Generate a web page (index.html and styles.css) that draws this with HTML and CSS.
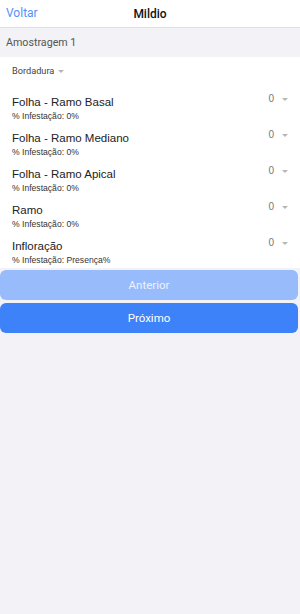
FILE: index.html
```html
<!DOCTYPE html>
<html lang="pt">
<head>
    <meta charset="UTF-8">
    <meta name="viewport" content="width=device-width, initial-scale=1.0">
    <title>Mildio</title>
    <link rel="stylesheet" href="styles.css">
</head>
<body>

    <div class="header">
        <a href="#" class="back">Voltar</a>
        <div class="title">Mildio</div>
    </div>

    <div class="section">Amostragem 1</div>

    <div class="content">
        <div class="picker">Bordadura <span class="caret"></span></div>

        <div class="item">
            <div class="item-text">
                <div class="item-title">Folha - Ramo Basal</div>
                <div class="item-sub">% Infestação: 0%</div>
            </div>
            <div class="item-value">0 <span class="caret"></span></div>
        </div>

        <div class="item">
            <div class="item-text">
                <div class="item-title">Folha - Ramo Mediano</div>
                <div class="item-sub">% Infestação: 0%</div>
            </div>
            <div class="item-value">0 <span class="caret"></span></div>
        </div>

        <div class="item">
            <div class="item-text">
                <div class="item-title">Folha - Ramo Apical</div>
                <div class="item-sub">% Infestação: 0%</div>
            </div>
            <div class="item-value">0 <span class="caret"></span></div>
        </div>

        <div class="item">
            <div class="item-text">
                <div class="item-title">Ramo</div>
                <div class="item-sub">% Infestação: 0%</div>
            </div>
            <div class="item-value">0 <span class="caret"></span></div>
        </div>

        <div class="item">
            <div class="item-text">
                <div class="item-title">Infloração</div>
                <div class="item-sub">% Infestação: Presença%</div>
            </div>
            <div class="item-value">0 <span class="caret"></span></div>
        </div>
    </div>

    <div class="actions">
        <button class="nav-button prev-button">Anterior</button>
        <button class="nav-button next-button">Próximo</button>
    </div>

</body>
</html>
```

FILE: styles.css
```css
html, body {
    height: 100%;
}

body {
    font-family: Roboto, "Liberation Sans", sans-serif;
    background-color: #f2f2f7;
    margin: 0;
    padding: 0;
    color: #222;
}

.header {
    position: relative;
    height: 27px;
    background-color: #ffffff;
    border-bottom: 1px solid #dedee3;
    display: flex;
    align-items: center;
    justify-content: center;
}

.header .back {
    position: absolute;
    left: 6px;
    top: 0;
    line-height: 27px;
    font-size: 12px;
    color: #5592f7;
    text-decoration: none;
}

.header .title {
    font-size: 12px;
    font-weight: 500;
    color: #111;
}

.section {
    height: 29px;
    line-height: 29px;
    padding-left: 6px;
    font-size: 10.7px;
    color: #555;
}

.content {
    background-color: #ffffff;
}

.picker {
    padding: 6px 12px 9px;
    line-height: 16px;
    font-size: 9.2px;
    color: #444;
    display: flex;
    align-items: center;
}

.picker .caret {
    margin-left: 4px;
}

.caret {
    display: inline-block;
    width: 0;
    height: 0;
    border-left: 3.5px solid transparent;
    border-right: 3.5px solid transparent;
    border-top: 3.5px solid #b5b5b5;
}

.item {
    display: flex;
    justify-content: space-between;
    align-items: flex-start;
    height: 36px;
    box-sizing: border-box;
    padding: 7px 12px 3px 12px;
    font-family: "Liberation Sans", Arial, sans-serif;
}

.item-title {
    font-size: 11.5px;
    line-height: 15px;
    color: #222;
}

.item-sub {
    margin-top: 1px;
    font-size: 8.6px;
    line-height: 11px;
    color: #333;
}

.item-value {
    display: flex;
    align-items: center;
    gap: 8px;
    margin-top: -2px;
    line-height: 12px;
    font-size: 10px;
    color: #777;
}

.actions {
    display: flex;
    flex-direction: column;
    gap: 3px;
    padding: 2px 2px 0 0;
}

.nav-button {
    height: 30px;
    border: none;
    border-radius: 6px;
    font-family: Roboto, "Liberation Sans", sans-serif;
    font-size: 11.5px;
    color: #ffffff;
    cursor: pointer;
}

.prev-button {
    background-color: #97bbfb;
    color: #eef3ff;
}

.next-button {
    background-color: #3d82f8;
}
```
